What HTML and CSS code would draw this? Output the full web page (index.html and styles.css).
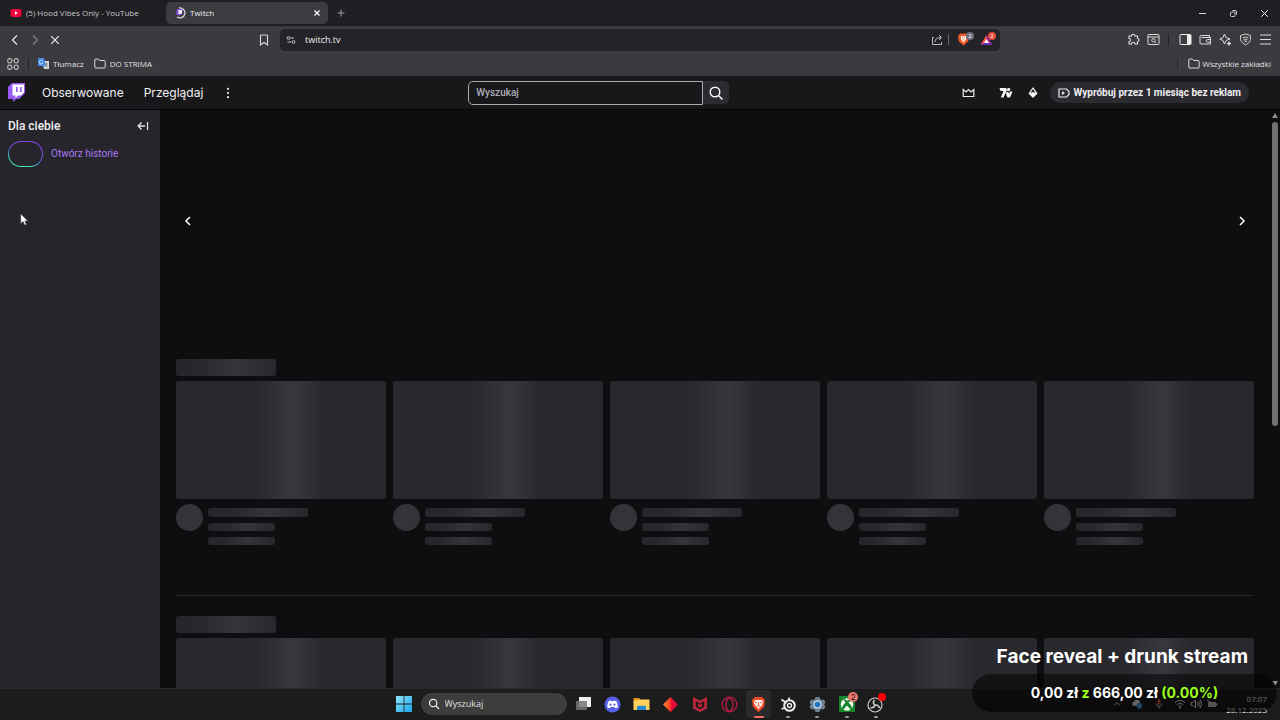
FILE: index.html
```html
<!DOCTYPE html>
<html lang="pl">
<head>
<meta charset="utf-8">
<meta name="viewport" content="width=device-width, initial-scale=1">
<title>Twitch</title>
<link rel="stylesheet" href="styles.css">
</head>
<body>
<div class="desktop">
  <header class="browser">
    <div class="tabs">
      <button class="tab">
        <svg width="12" height="12" viewBox="0 0 12 12"><rect x="0.5" y="2" width="11" height="8" rx="2" fill="#f0043c"/><path d="M5 4.300l3 1.700-3 1.700z" fill="#fff"/></svg>
        <span>(5) Hood Vibes Only - YouTube</span>
      </button>
      <div class="tab tab-active">
        <svg width="12" height="12" viewBox="0 0 12 12"><path d="M2.500 3l1-1h5v4.500L7 8H5.500L4.500 9V8h-2z" fill="#8a55dd"/><path d="M4.500 3H8v3L7 7H4.500z" fill="#eee"/><path d="M5 1a5 5 0 1 1-2 9" fill="none" stroke="#dcd8e8" stroke-width="1.300"/></svg>
        <span class="tab-name">Twitch</span>
        <button class="tab-close" aria-label="Zamknij kartę"><svg width="8" height="8" viewBox="0 0 8 8"><path d="M1.500 1.500l5 5m0-5l-5 5" stroke="#fff" stroke-width="1.200"/></svg></button>
      </div>
      <button class="tab-new" aria-label="Nowa karta"><svg width="8" height="8" viewBox="0 0 8 8"><path d="M4 .5v7M.5 4h7" stroke="#a0a0a4"/></svg></button>
      <div class="window-buttons">
        <button aria-label="Minimalizuj"><svg width="9" height="9" viewBox="0 0 9 9"><path d="M1 4.500h7" stroke="#ddd"/></svg></button>
        <button aria-label="Przywróć"><svg width="9" height="9" viewBox="0 0 9 9" fill="none" stroke="#ccc"><rect x="1.500" y="3" width="4.500" height="4.500" rx="1"/><path d="M3.500 1.500H6A1.500 1.500 0 0 1 7.500 3v2.500"/></svg></button>
        <button aria-label="Zamknij"><svg width="9" height="9" viewBox="0 0 9 9"><path d="M1.200 1.200l6.600 6.600m0-6.600L1.200 7.800" stroke="#eee"/></svg></button>
      </div>
    </div>

    <div class="toolbar">
      <div class="history">
        <button class="tool" aria-label="Wstecz"><svg width="12" height="12" viewBox="0 0 12 12"><path d="M8 1.500L3.500 6 8 10.500" fill="none" stroke="#eee" stroke-width="1.200"/></svg></button>
        <button class="tool" aria-label="Dalej"><svg width="12" height="12" viewBox="0 0 12 12"><path d="M4 1.500L8.500 6 4 10.500" fill="none" stroke="#858488" stroke-width="1.200"/></svg></button>
        <button class="tool" aria-label="Zatrzymaj"><svg width="12" height="12" viewBox="0 0 12 12"><path d="M2.200 2.200l7.600 7.600m0-7.600L2.200 9.800" stroke="#eee" stroke-width="1.200"/></svg></button>
      </div>
      <div class="location">
        <button class="tool" aria-label="Dodaj zakładkę"><svg width="12" height="12" viewBox="0 0 12 12"><path d="M2.500 1.800q0-.8.8-.8h5.400q.8 0 .8.800V11L6 8.500 2.500 11z" fill="none" stroke="#ddd" stroke-width="1.100"/></svg></button>
        <div class="address">
          <svg width="10" height="10" viewBox="0 0 10 10" fill="none" stroke="#c4c4c8"><circle cx="2.500" cy="3" r="1.400"/><path d="M4.500 3H8M1.500 7h3.700"/><circle cx="7.500" cy="7" r="1.400"/></svg>
          <input class="url" type="text" value="twitch.tv" aria-label="Adres strony">
          <button class="address-button" aria-label="Udostępnij"><svg width="12" height="12" viewBox="0 0 12 12" fill="none" stroke="#b8b8bc"><path d="M3 3.500H1.500v7h9V8"/><path d="M4 8q0-4.500 6-4.500M8 1l2.500 2.500L8 6"/></svg></button>
          <span class="divider divider-light"></span>
          <button class="address-button shield" aria-label="Brave Shields"><svg width="13" height="13" viewBox="0 0 12 12"><path d="M3 .5h6l2 2-.5 5L6 11.500 1.500 7.500 1 2.500z" fill="#ee5427"/><path d="M3.500 3h5L8.300 6 6 9 3.700 6z" fill="#fff"/><path d="M5 4l1 1.500L7 4M5 6.500h2" fill="none" stroke="#ee5427" stroke-width=".7"/></svg><span class="count">2</span></button>
          <button class="address-button rewards" aria-label="Brave Rewards"><svg width="13" height="12" viewBox="0 0 13 12"><path d="M6.500 1L.5 11h12z" fill="#a4249c"/><path d="M6.500 1L.5 11l6-4z" fill="#ff5530"/><path d="M.5 11h12l-6-3z" fill="#5b32b4"/><path d="M6.500 5L4 9h5z" fill="#fff"/></svg><span class="count count-red">2</span></button>
        </div>
      </div>
      <div class="tools">
        <button class="tool" aria-label="Rozszerzenia"><svg width="13" height="13" viewBox="0 0 13 13"><path d="M2 3h2.500a1.500 1.500 0 1 1 3.500 0h2.500v2.500a1.500 1.500 0 1 1 0 3V11H8a1.500 1.500 0 0 0-3.500 0H2V8.500a1.500 1.500 0 1 0 0-3z" fill="none" stroke="#ddd" stroke-width="1.100"/></svg></button>
        <button class="tool" aria-label="Szukaj w kartach"><svg width="13" height="13" viewBox="0 0 13 13" fill="none" stroke="#ddd"><rect x="1" y="1.500" width="11" height="10" rx="1"/><path d="M1 4h11"/><circle cx="6.500" cy="7.300" r="1.700"/><path d="M7.700 8.500L9 10"/></svg></button>
        <span class="divider"></span>
        <button class="tool" aria-label="Panel boczny"><svg width="13" height="13" viewBox="0 0 13 13"><rect x="1" y="1.500" width="11" height="10" rx="1" fill="none" stroke="#eee"/><path d="M8 2h4v9H8z" fill="#eee"/></svg></button>
        <button class="tool" aria-label="Portfel"><svg width="13" height="13" viewBox="0 0 13 13" fill="none" stroke="#ddd"><path d="M10.500 4V2.500H2.200A1.200 1.200 0 0 0 1 3.500V10q0 1 1 1h9.500V4.500h-9M12 6.500H8.500a1.200 1.200 0 0 0 0 2.500H12"/></svg></button>
        <button class="tool" aria-label="Leo AI"><svg width="13" height="13" viewBox="0 0 13 13" fill="none" stroke="#ddd"><path d="M5.500 1L7 4.500 11 6 7 7.500 5.500 11 4 7.500.8 6 4 4.500z"/><path d="M10 8.500v4M8 10.500h4" stroke-width="1.300"/></svg></button>
        <button class="tool" aria-label="VPN"><svg width="13" height="13" viewBox="0 0 13 13" fill="none" stroke="#ccc"><path d="M6.500 1L11.500 2.500v4q0 3-5 5.500-5-2.500-5-5.500v-4z"/><path d="M3.500 5q3-2 6 0M4.500 6.700q2-1.200 4 0"/><path d="M5.500 8h2l-1 1z" fill="#ccc"/></svg></button>
        <button class="tool" aria-label="Menu"><svg width="13" height="13" viewBox="0 0 13 13"><path d="M1 2h11M1 6.500h11M1 11h11" stroke="#ddd" stroke-width="1.100"/></svg></button>
      </div>
    </div>

    <nav class="bookmarks" aria-label="Zakładki">
      <button class="tool" aria-label="Grupy kart"><svg width="12" height="12" viewBox="0 0 12 12" fill="none" stroke="#ddd"><rect x=".8" y=".8" width="4" height="4" rx="1"/><rect x="7.200" y=".8" width="4" height="4" rx="1"/><rect x=".8" y="7.200" width="4" height="4" rx="1"/><rect x="7.200" y="7.200" width="4" height="4" rx="1"/></svg></button>
      <span class="divider"></span>
      <a class="bookmark" href="#"><svg width="11" height="11" viewBox="0 0 11 11"><path d="M4 3h7v8H6z" fill="#d5d9df"/><path d="M0 0h6l2 8H0z" fill="#4388ea"/><path d="M4.800 3A2 2 0 1 0 5 5H3.400" fill="none" stroke="#e9efff" stroke-width=".8"/><path d="M7 6h3M8.500 5v1q0 2-1.500 3m.5-2L10 9" fill="none" stroke="#777" stroke-width=".7"/></svg><span>Tłumacz</span></a>
      <a class="bookmark bookmark-folder" href="#"><svg width="12" height="11" viewBox="0 0 12 11"><path d="M.8 9V2q0-1 1-1h2.500l1.300 1.500h4.600q1 0 1 1V9q0 1-1 1H1.800q-1 0-1-1z" fill="none" stroke="#ddd"/></svg><span>DO STRIMA</span></a>
      <a class="bookmark bookmark-all" href="#"><svg width="12" height="11" viewBox="0 0 12 11"><path d="M.8 9V2q0-1 1-1h2.500l1.300 1.500h4.600q1 0 1 1V9q0 1-1 1H1.800q-1 0-1-1z" fill="none" stroke="#ddd"/></svg><span>Wszystkie zakładki</span></a>
    </nav>
  </header>

  <header class="site-nav">
    <nav class="site-links" aria-label="Twitch">
      <a class="logo" href="#" aria-label="Twitch"><svg width="17" height="19" viewBox="0 0 17 19"><path d="M0 4l4-4h13v10l-6 6H8l-3 3v-3H0z" fill="#9a5cf5"/><path d="M4.500 1.500H16v8L13 12.500h-3L7.500 15v-2.500h-3z" fill="#fff"/><path d="M8 4h1.700v5H8zM12 4h1.700v5H12z" fill="#9a5cf5"/></svg></a>
      <a href="#">Obserwowane</a>
      <a href="#">Przeglądaj</a>
      <button class="icon-button" aria-label="Więcej"><svg width="12" height="12" viewBox="0 0 12 12" fill="#f0f0f2"><circle cx="6" cy="1.800" r="1.100"/><circle cx="6" cy="6" r="1.100"/><circle cx="6" cy="10.200" r="1.100"/></svg></button>
    </nav>
    <form class="site-search">
      <input type="search" placeholder="Wyszukaj" aria-label="Wyszukaj na Twitchu">
      <button type="button" aria-label="Szukaj"><svg width="14" height="14" viewBox="0 0 14 14" fill="none" stroke="#fff" stroke-width="1.400"><circle cx="6" cy="6" r="4.800"/><path d="M9.500 9.500l4 4"/></svg></button>
    </form>
    <div class="site-actions">
      <button class="icon-button crown" aria-label="Prime"><svg width="13" height="12" viewBox="0 0 13 12"><path d="M1.200 2.500L4 5l2.500-2.500L9 5l2.800-2.500v7H1.200z" fill="none" stroke="#eee" stroke-width="1.200"/></svg></button>
      <button class="icon-button" aria-label="7TV"><svg width="14" height="12" viewBox="0 0 14 12" fill="#f5f5f7"><path d="M.5 1H7L8 3 4.500 10.500H1.800L4.500 4H1.500zM8.500 1h2l1 1.500-1 1.500H8zM7.500 5h2l.6 2L11 4.500h2.500L11 10.500H8.500L7 7z"/></svg></button>
      <button class="icon-button" aria-label="Bity"><svg width="12" height="13" viewBox="0 0 12 13"><path d="M6 1l4.500 6.500L6 12 1.500 7.500z" fill="#f5f5f7"/><path d="M6 3l2.500 4L6 6 3.500 7z" fill="#18181b"/></svg></button>
      <button class="promo"><svg width="12" height="10" viewBox="0 0 12 10"><path d="M8.500 1H1v8h7.500L11 6.500v-3z" fill="none" stroke="#eee" stroke-width="1.200"/><path d="M4 3l3 2-3 2z" fill="#eee"/></svg><span>Wypróbuj przez 1 miesiąc bez reklam</span></button>
    </div>
  </header>

  <div class="page">
    <aside class="sidebar">
      <div class="sidebar-head">
        <h2>Dla ciebie</h2>
        <button class="icon-button" aria-label="Zwiń"><svg width="12" height="10" viewBox="0 0 12 10"><path d="M4.500 1.500L1.200 5l3.300 3.500M1.500 5H8M10.500 1v8" fill="none" stroke="#dedee3" stroke-width="1.300"/></svg></button>
      </div>
      <a class="stories" href="#"><span class="story-ring"></span><span>Otwórz historie</span></a>
    </aside>
    <main class="feed">
      <div class="carousel">
        <button class="icon-button" aria-label="Poprzedni"><svg width="12" height="12" viewBox="0 0 12 12"><path d="M8 2L4 6l4 4" fill="none" stroke="#fff" stroke-width="1.500"/></svg></button>
        <button class="icon-button" aria-label="Następny"><svg width="12" height="12" viewBox="0 0 12 12"><path d="M4 2l4 4-4 4" fill="none" stroke="#fff" stroke-width="1.500"/></svg></button>
      </div>
      <section class="shelf">
        <div class="shelf-title bone"></div>
        <div class="cards">
          <article class="card"><div class="thumb"></div><div class="meta"><i class="avatar"></i><div class="lines"><i class="bone"></i><i class="bone"></i><i class="bone"></i></div></div></article>
          <article class="card"><div class="thumb"></div><div class="meta"><i class="avatar"></i><div class="lines"><i class="bone"></i><i class="bone"></i><i class="bone"></i></div></div></article>
          <article class="card"><div class="thumb"></div><div class="meta"><i class="avatar"></i><div class="lines"><i class="bone"></i><i class="bone"></i><i class="bone"></i></div></div></article>
          <article class="card"><div class="thumb"></div><div class="meta"><i class="avatar"></i><div class="lines"><i class="bone"></i><i class="bone"></i><i class="bone"></i></div></div></article>
          <article class="card"><div class="thumb"></div><div class="meta"><i class="avatar"></i><div class="lines"><i class="bone"></i><i class="bone"></i><i class="bone"></i></div></div></article>
        </div>
      </section>
      <section class="shelf shelf-next">
        <div class="shelf-title bone"></div>
        <div class="cards">
          <article class="card"><div class="thumb"></div></article>
          <article class="card"><div class="thumb"></div></article>
          <article class="card"><div class="thumb"></div></article>
          <article class="card"><div class="thumb"></div></article>
          <article class="card"><div class="thumb"></div></article>
        </div>
      </section>
    </main>
    <div class="scrollbar">
      <svg width="6" height="5" viewBox="0 0 6 5"><path d="M3 0l3 5H0z" fill="#8b8b8b"/></svg>
      <span class="scroll-thumb"></span>
      <svg class="scroll-down" width="6" height="5" viewBox="0 0 6 5"><path d="M0 0h6L3 5z" fill="#8b8b8b"/></svg>
    </div>
  </div>

  <footer class="taskbar">
    <div class="dock">
      <button class="start" aria-label="Start"><svg width="16" height="16" viewBox="0 0 16 16"><defs><linearGradient id="win" x2="1" y2="1"><stop stop-color="#8de4fb"/><stop offset="1" stop-color="#19a6ec"/></linearGradient></defs><path d="M0 0h7.600v7.600H0zM8.400 0H16v7.600H8.400zM0 8.400h7.600V16H0zM8.400 8.400H16V16H8.400z" fill="url(#win)"/></svg></button>
      <label class="task-search"><svg width="12" height="12" viewBox="0 0 12 12" fill="none" stroke="#eee" stroke-width="1.200"><circle cx="5.200" cy="5" r="3.700"/><path d="M8 8l3 3"/></svg><input type="search" placeholder="Wyszukaj" aria-label="Wyszukaj w systemie"></label>
      <div class="apps">
        <button class="app" aria-label="Widok zadań"><svg width="17" height="16" viewBox="0 0 17 16"><rect x="4" y="1" width="12" height="10" fill="#f1f1f1"/><rect x="1" y="5" width="11" height="9" fill="#777" opacity=".85"/></svg></button>
        <button class="app" aria-label="Discord"><svg width="17" height="17" viewBox="0 0 17 17"><circle cx="8.500" cy="8.500" r="8" fill="#5661e8"/><path d="M4.500 5.500q1-.8 2.500-1l.4.700h2.200l.4-.7q1.500.2 2.500 1 1.500 3 1.300 5.700-1.300 1-2.600 1l-.6-1.200H6.400l-.6 1.200q-1.300 0-2.600-1-.2-2.700 1.300-5.700z" fill="#fff"/><circle cx="6.500" cy="8.700" r="1.100" fill="#5661e8"/><circle cx="10.500" cy="8.700" r="1.100" fill="#5661e8"/></svg></button>
        <button class="app" aria-label="Eksplorator plików"><svg width="17" height="16" viewBox="0 0 17 16"><path d="M.5 2h5.500l1.500 2H12v2H.5z" fill="#e79a18"/><path d="M.5 5l6-1.500h10V14H.5z" fill="#fed25b"/><path d="M4 14v-3q0-1.200 1.200-1.200h6.600q1.200 0 1.200 1.200v3z" fill="#248bd3"/></svg></button>
        <button class="app" aria-label="Mapy"><svg width="17" height="17" viewBox="0 0 17 17"><defs><linearGradient id="gem"><stop stop-color="#ff8a3b"/><stop offset=".45" stop-color="#fb4020"/><stop offset=".55" stop-color="#ee1236"/><stop offset="1" stop-color="#d0063f"/></linearGradient></defs><path d="M8.500 1L16 8.500 8.500 16 1 8.500z" fill="url(#gem)"/></svg></button>
        <button class="app" aria-label="McAfee"><svg width="16" height="17" viewBox="0 0 16 17"><path d="M1 1l7 3.500L15 1v11.500L8 16l-7-3.500z" fill="#b9283a"/><path d="M3.800 5L8 7.500 12.200 5v6L8 13.200 3.800 11z" fill="#27181b"/><path d="M6 7.500l2 1.300 2-1.300v2.800L8 11.500l-2-1.200z" fill="#b9283a"/></svg></button>
        <button class="app" aria-label="Opera GX"><svg width="17" height="17" viewBox="0 0 17 17" fill="none" stroke="#b51c48"><circle cx="8.500" cy="8.500" r="7.300" stroke-width="1.300"/><ellipse cx="8.500" cy="8.500" rx="3.500" ry="6.500" stroke-width="1.400"/></svg></button>
        <button class="app app-current" aria-label="Brave"><svg width="15" height="17" viewBox="0 0 15 17"><path d="M4 1h7l3 3-1 7-5.500 5L2 11 1 4z" fill="#f24b29"/><path d="M4 4h7l1 2-1 3-3.500 4L4 9 3 6z" fill="#fff"/><path d="M4 6l2 1m5-1L9 7M7.500 6v3M6 10h3" stroke="#f24b29"/></svg></button>
        <button class="app app-open" aria-label="Steam"><svg width="17" height="17" viewBox="0 0 17 17"><path d="M1.500 3.500l5 3.500M9 1.500v3M1.500 13l4-1.500" stroke="#eee" stroke-width="1.800"/><circle cx="9.500" cy="9.500" r="5.300" fill="none" stroke="#eee" stroke-width="2"/><circle cx="9.500" cy="9.500" r="2" fill="none" stroke="#eee" stroke-width="1.300"/></svg></button>
        <button class="app app-open" aria-label="Ustawienia"><svg width="17" height="17" viewBox="0 0 17 17"><path d="M6.500 1h4l.6 2 1.900 1 2-.5 1.500 3.300L15 8.500l1.500 1.700L15 13.500l-2-.5-1.900 1-.6 2h-4l-.6-2L4 13l-2 .5L.5 10.200 2 8.500.5 6.800 2 3.500 4 4l1.900-1z" fill="#718295"/><circle cx="8.500" cy="8.500" r="4" fill="#e9f3fa"/><circle cx="8.500" cy="8.500" r="3" fill="#2676bd"/></svg></button>
        <button class="app app-open" aria-label="Xbox"><svg width="16" height="16" viewBox="0 0 16 16"><path d="M0 0h16v16H0z" fill="#17872e"/><circle cx="8" cy="8.500" r="6.200" fill="#f4f8f4"/><path d="M4 2.800q2 0 4 2 2-2 4 0L9.500 6.500q3.500 3.500 3.500 6L12 14 8 9.500 4 14l-1-1.500q0-2.500 3.500-6z" fill="#17872e"/></svg><span class="app-badge">2</span></button>
        <button class="app app-open" aria-label="OBS"><svg width="17" height="17" viewBox="0 0 17 17" fill="none"><circle cx="8" cy="9" r="7" stroke="#cfcfcf" stroke-width="1.200"/><path d="M7.500 4q-2.500 3 .5 5M12.500 12q-1-3.500-4.500-3M3.500 11.500q3.500 1 4.500-2.500" stroke="#cfcfcf" stroke-width="1.600"/></svg><span class="record-dot"></span></button>
      </div>
    </div>
    <div class="tray">
      <svg width="10" height="10" viewBox="0 0 10 10"><path d="M2 6.500l3-3 3 3" fill="none" stroke="#fff"/></svg>
      <svg class="tray-cloud" width="12" height="12" viewBox="0 0 12 12"><path d="M3 8a2.300 2.300 0 0 1 0-4.500 3.200 3.200 0 0 1 6 1L8 8z" fill="#fff"/><circle cx="8.500" cy="8" r="3" fill="#28a0ee"/><path d="M8.500 6.500v3" stroke="#fff"/></svg>
      <svg class="tray-mic" width="10" height="12" viewBox="0 0 10 12"><rect x="3.500" y="1" width="3" height="6" rx="1.500" fill="#f05545"/><path d="M2 5.500q0 3 3 3t3-3M5 8.500v2.500" fill="none" stroke="#ddd"/></svg>
      <svg class="tray-wifi" width="12" height="12" viewBox="0 0 12 12" fill="none" stroke="#fff"><path d="M1 4.500q5-4 10 0M2.700 6.500q3.300-2.600 6.600 0M4.300 8.400q1.700-1.300 3.400 0"/><circle cx="6" cy="10" r=".6"/></svg>
      <svg width="12" height="12" viewBox="0 0 12 12" fill="none" stroke="#fff"><path d="M1 4.500h2L5.500 2v8L3 7.500H1zM7 4.500q1 1.500 0 3M8.500 3q2 3 0 6M10 1.500q3 4.500 0 9"/></svg>
      <svg width="12" height="12" viewBox="0 0 12 12"><path d="M2 4h8v5H2zM10 5.500h1.500v2H10z" fill="#ddd"/><path d="M1 2l4 3" stroke="#fff"/></svg>
      <div class="clock"><time>07:07</time><time>28.12.2025</time></div>
    </div>
  </footer>

  <div class="goal">
    <div class="goal-title">Face reveal + drunk stream</div>
    <div class="goal-bar">0,00 zł <em>z</em> 666,00 zł <em>(0.00%)</em></div>
  </div>
  <svg class="cursor" width="9" height="13" viewBox="0 0 9 13"><path d="M.7.7v10L3 8.500 4.800 12.300l1.700-.8L4.900 8h3z" fill="#fff" stroke="#222" stroke-width=".5"/></svg>
</div>
</body>
</html>
```

FILE: styles.css
```css
* { box-sizing: border-box; }
body { margin: 0; background: #0e0e10; color: #efeff1; font-family: Inter, "Liberation Sans", sans-serif; }
button, input { font: inherit; color: inherit; margin: 0; padding: 0; border: 0; background: none; }
a { color: inherit; text-decoration: none; }
svg { display: block; flex: none; }
button { display: flex; align-items: center; justify-content: center; }
input { min-width: 0; outline: 0; }

.desktop { position: relative; display: flex; flex-direction: column; height: 100vh; overflow: hidden; }

/* Browser window */
.browser { flex: none; background: #3b3a3e; font: 8px/12px "Open Sans", "Noto Sans", sans-serif; }
.tabs { display: flex; align-items: center; height: 26px; padding-left: 4px; background: #1f1e23; }
.tab { display: flex; align-items: center; justify-content: flex-start; gap: 4px; width: 162px; height: 22px; padding: 0 6px 1px; color: #c7c7cb; }
.tab-active { padding: 0 6px 1px 8px; border-radius: 5px; background: #3c3b40; color: #efeff1; }
.tab-name { flex: 1; }
.tab-close { width: 10px; height: 12px; }
.tab-new { width: 26px; height: 20px; }
.window-buttons { display: flex; margin-left: auto; }
.window-buttons button { width: 31px; height: 24px; }
.toolbar { display: flex; align-items: center; height: 27px; }
.tool { flex: none; width: 20px; height: 20px; }
.history { display: flex; flex: 0 0 254px; padding-left: 5px; }
.location { display: flex; align-items: center; flex: 1; gap: 6px; }
.address { display: flex; align-items: center; flex: 1; height: 22px; padding: 0 2px 0 6px; border-radius: 5px; background: #242328; }
.url { flex: 1; margin-left: 9px; font-size: 9px; }
.address-button { position: relative; flex: none; width: 20px; height: 20px; }
.shield { width: 22px; }
.count { position: absolute; top: 2px; right: 0; width: 8px; height: 8px; border-radius: 50%; background: #6b6d79; color: #fff; font-size: 6px; line-height: 8px; text-align: center; }
.count-red { right: 2px; background: #e64b3d; }
.rewards { width: 24px; }
.divider { flex: none; width: 1px; height: 12px; margin: 0 6px 0 5px; background: #252429; }
.divider-light { height: 11px; margin: 0 3px 0 1px; background: #66656a; }
.tools { display: flex; align-items: center; justify-content: flex-end; flex: 0 0 280px; padding-right: 5px; }
.bookmarks { display: flex; align-items: center; height: 23px; padding: 0 9px 2px 3px; }
.bookmark { display: flex; align-items: center; gap: 4px; margin-left: 3px; color: #e1e1e4; }
.bookmark-folder { margin-left: 10px; }
.bookmark-all { gap: 3px; margin-left: auto; padding-left: 10px; border-left: 1px solid #252429; }

/* Site navigation */
.site-nav { display: flex; align-items: center; justify-content: space-between; flex: none; height: 34px; border-bottom: 1px solid #050506; background: #18181b; }
.site-links { display: flex; align-items: center; flex: 0 0 239px; padding-left: 8px; font-size: 12px; line-height: 16px; gap: 20px; }
.logo { margin-right: -3px; }
.icon-button { flex: none; width: 20px; height: 20px; }
.site-links .icon-button { margin-left: -5px; }
.site-search { display: flex; align-items: center; flex: 0 1 261px; min-width: 120px; }
.site-search input { flex: 1; height: 24px; padding: 0 7px; border: 1px solid #aaaab0; border-radius: 5px 0 0 5px; font: 500 10px/14px Roboto, sans-serif; }
.site-search input::placeholder { color: #adadb8; opacity: 1; }
.site-search button { width: 26px; height: 23px; border-radius: 0 5px 5px 0; background: #2c2b30; }
.site-actions { display: flex; align-items: center; justify-content: flex-end; flex: 0 0 320px; padding-right: 31px; gap: 7px; }
.crown { margin-right: 10px; }
.promo { flex: none; height: 21px; gap: 4px; padding: 0 8px; border-radius: 11px; background: #2c2b30; font: 700 10px/14px Roboto, sans-serif; white-space: nowrap; }

/* Page */
.page { display: flex; flex: 1; min-height: 0; }
.sidebar { flex: 0 0 160px; padding: 6px 7px 0 8px; background: #26252b; font-family: Roboto, sans-serif; }
.sidebar-head { display: flex; align-items: center; justify-content: space-between; height: 20px; }
.sidebar h2 { margin: 0; font-size: 12px; font-weight: 500; line-height: 16px; }
.stories { display: flex; align-items: center; gap: 8px; margin-top: 5px; color: #a977f5; font-size: 10px; line-height: 12px; }
.story-ring { width: 35px; height: 26px; border: 1px solid transparent; border-radius: 13px; background: linear-gradient(#26252b, #26252b) padding-box, linear-gradient(200deg, #8a45e6 35%, #4b67d2 55%, #3fe0bd 75%) border-box; }
.feed { flex: 1; min-width: 0; overflow: hidden; padding: 0 16px; }
.carousel { display: flex; align-items: center; justify-content: space-between; height: 249px; padding: 0 2px 28px; }
.shelf-title { width: 100px; height: 17px; margin-bottom: 5px; }
.bone { display: block; border-radius: 3px; background: linear-gradient(90deg, #27262a 20%, #353439 60%, #29282c 95%); }
.cards { display: grid; grid-template-columns: repeat(5, 1fr); gap: 7px; }
.thumb { aspect-ratio: 16 / 9; border-radius: 3px; background: linear-gradient(90deg, #29282d 38%, #37363c 55%, #37363c 57%, #29282d 70%); }
.meta { display: flex; gap: 5px; margin-top: 5px; }
.avatar { flex: none; width: 27px; height: 27px; border-radius: 50%; background: #343338; }
.lines { display: flex; flex-direction: column; gap: 6px; padding-top: 4px; }
.lines .bone { width: 67px; height: 8px; }
.lines .bone:first-child { width: 100px; height: 9px; }
.shelf-next { margin-top: 50px; padding-top: 20px; border-top: 1px solid #29282c; }
.scrollbar { display: flex; flex-direction: column; align-items: center; flex: 0 0 10px; padding: 3px 0 2px; }
.scroll-thumb { flex: 0 0 53%; width: 6px; margin-top: 4px; border-radius: 3px; background: #717171; }
.scroll-down { margin-top: auto; }

/* Taskbar */
.taskbar { display: grid; grid-template-columns: 1fr auto 1fr; align-items: center; flex: none; height: 32px; padding-left: 4px; background: #1c1c1c; box-shadow: inset 0 1px #2b2a2c; }
.dock { grid-column: 2; display: flex; align-items: center; }
.task-search { display: flex; align-items: center; width: 146px; height: 22px; margin: 0 4px 0 9px; padding-left: 7px; gap: 5px; border-radius: 11px; background: #3d3d3d; }
.task-search input { flex: 1; font: 9px/14px "Open Sans", "Noto Sans", sans-serif; }
.task-search input::placeholder { color: #e0e0e0; opacity: 1; }
.apps { display: flex; justify-content: space-between; width: 318px; }
.app { position: relative; width: 25px; height: 28px; border-radius: 3px; }
.app-current { background: #2a2a2a; }
.app-open::after, .app-current::after { content: ""; position: absolute; bottom: 0; width: 4px; height: 2px; border-radius: 1px; background: #999; }
.app-current::after { width: 10px; background: #f36d66; }
.app-badge { position: absolute; top: 2px; right: 1px; width: 10px; height: 10px; border-radius: 50%; background: #e87970; color: #2c1515; font-size: 8px; line-height: 10px; }
.record-dot { position: absolute; top: 3px; right: 2px; width: 8px; height: 8px; border-radius: 50%; background: #fb0005; }
.tray { display: flex; align-items: center; justify-content: flex-end; gap: 4px; padding-right: 13px; }
.tray-cloud { margin-left: 5px; }
.tray-mic { margin-left: 7px; }
.tray-wifi { margin-left: 6px; }
.clock { display: flex; flex-direction: column; align-items: flex-end; margin-left: 4px; color: #fff; font: 8px/11px "Open Sans", "Noto Sans", sans-serif; }

/* Stream overlay */
.goal { position: absolute; right: 3px; bottom: 8px; width: 305px; color: #fff; font-weight: 700; white-space: nowrap; }
.goal-title { padding: 0 29px 5px 0; font-size: 19px; line-height: 24px; text-align: right; }
.goal-bar { height: 38px; border-radius: 19px; background: linear-gradient(rgba(0, 0, 0, .5), rgba(0, 0, 0, .65)); font-size: 14px; line-height: 37px; text-align: center; }
.goal em { color: #9cff1e; font-style: normal; }
.cursor { position: absolute; top: 213px; left: 20px; }
```
